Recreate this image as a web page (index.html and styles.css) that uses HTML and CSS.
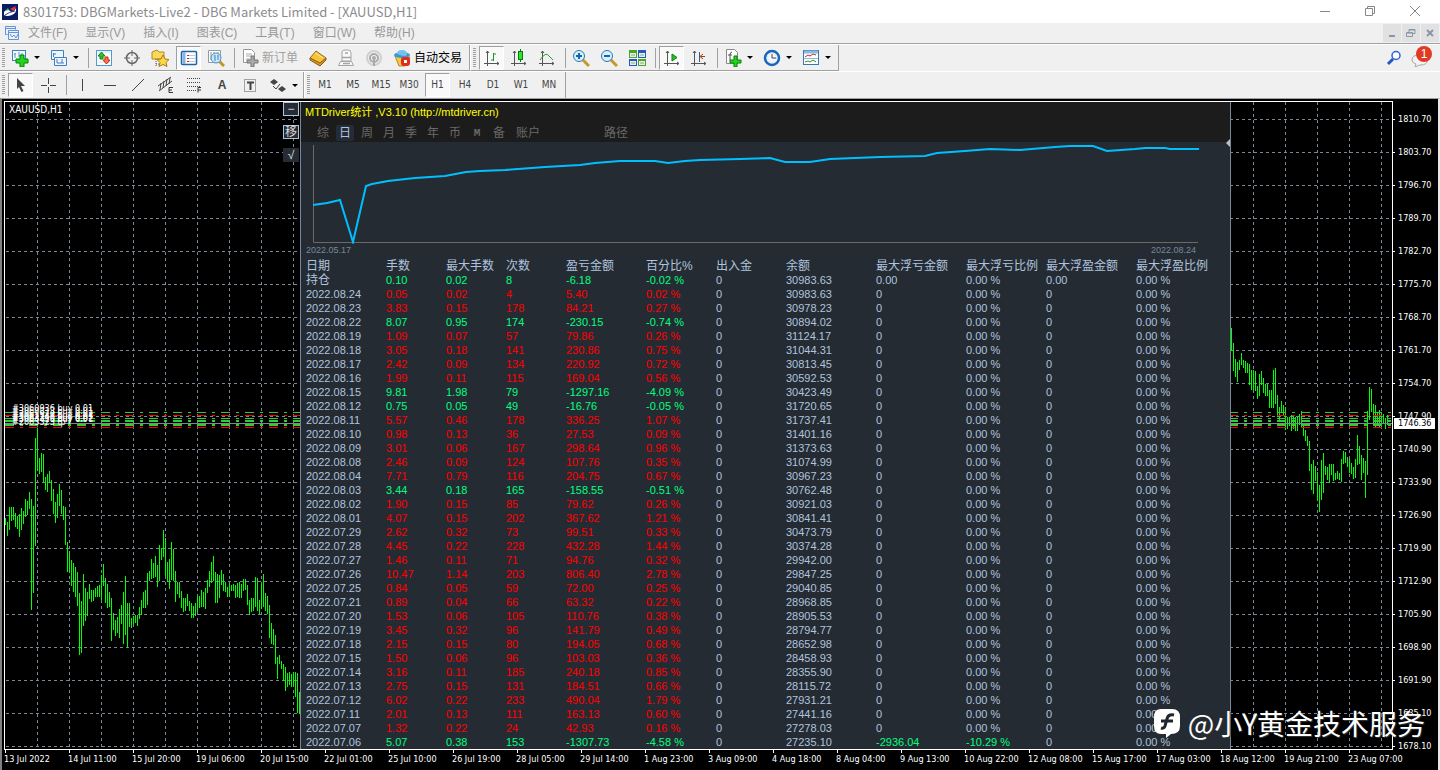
FILE: index.html
```html
<!DOCTYPE html>
<html lang="zh-CN">
<head>
<meta charset="utf-8">
<title>8301753: DBGMarkets-Live2 - DBG Markets Limited - [XAUUSD,H1]</title>
<link rel="stylesheet" href="styles.css">
</head>
<body>
<header class="titlebar">
  <svg class="logo" width="16" height="16" viewBox="0 0 16 16"><rect width="16" height="16" fill="#0b1c63"/><path d="M2 8Q5 4 8 7T14 4Q15 9 10 11T2 11Z" fill="#fff"/><path d="M8 5L14 2L12 7Z" fill="#e33"/><path d="M3 7L6 4L7 6Z" fill="#3ac04e"/><path d="M3 11Q7 8 13 7" stroke="#2b47a8" fill="none"/></svg>
  <h1 class="title">8301753: DBGMarkets-Live2 - DBG Markets Limited - [XAUUSD,H1]</h1>
  <div class="caption-buttons">
    <button aria-label="最小化"><svg width="12" height="12"><path d="M1 6.500h10" stroke="#888"/></svg></button>
    <button aria-label="还原"><svg width="12" height="12" fill="none" stroke="#888"><path d="M1.500 3.500h7v7h-7zM3.500 3.500v-2h7v7h-2"/></svg></button>
    <button aria-label="关闭"><svg width="12" height="12"><path d="M1 1l10 10M11 1L1 11" stroke="#888"/></svg></button>
  </div>
</header>

<nav class="menubar">
  <svg class="menu-icon" width="14" height="14" fill="none" stroke="#5d94e0"><path d="M.5 8.500v-8h10v3M.5 2.500h10M2.500 8.500h-2M3.500 4.500h10v9h-10zM3.500 6.500h10"/><path d="M5 8l2 3 2-2 2 3 2-4"/></svg>
  <button>文件(F)</button><button>显示(V)</button><button>插入(I)</button><button>图表(C)</button><button>工具(T)</button><button>窗口(W)</button><button>帮助(H)</button>
  <div class="mdi-buttons">
    <button aria-label="最小化图表"><svg width="10" height="10"><path d="M2 8h6" stroke="#8797a8" stroke-width="2"/></svg></button>
    <button aria-label="还原图表"><svg width="10" height="10" fill="none" stroke="#8797a8"><path d="M.5 4.500h6v4h-6zM1 5h5M3 4V1.500h6v4H7M3 2h6"/></svg></button>
    <button aria-label="关闭图表"><svg width="10" height="10"><path d="M2 2l6 6M8 2L2 8" stroke="#8797a8" stroke-width="2"/></svg></button>
  </div>
</nav>

<div class="toolbars">
  <div class="toolrow">
    <div class="toolgroup">
      <i class="grip"></i>
      <button class="tool drop" aria-label="新图表"><svg width="18" height="18"><rect x="1.500" y="1.500" width="13" height="10" fill="#eef6ff" stroke="#3d80bd"/><path d="M4 4v5M3 5h2M8 3v5M11 4v4" stroke="#6d94b5"/><path d="M9 6h4v4h4v4h-4v4H9v-4H5v-4h4z" fill="#23d51f" stroke="#078008"/></svg></button>
      <button class="tool drop" aria-label="图表组合"><svg width="18" height="18" fill="#edf5ff" stroke="#3d80bd"><path d="M1.500 1.500h12v9h-12z"/><path d="M3.500 4v4M3 5h3" fill="none"/><path d="M4.500 8.500h12v8h-12z"/><path d="M7 10v4M12 10v4M7 14h7" fill="none"/></svg></button>
      <i class="sep"></i>
      <button class="tool" aria-label="市场报价"><svg width="18" height="18"><rect x="1.500" y="1.500" width="15" height="15" fill="#fff" stroke="#4c9bd6"/><path d="M3 3h12M3 13h12" stroke="#cde"/><path d="M3 7l3.500-4L10 7H8v3H5V7z" fill="#31c12b" stroke="#178217"/><path d="M8 11l3.500 4 3.500-4h-2V8h-3v3z" fill="#f87642" stroke="#c32d12"/></svg></button>
      <button class="tool" aria-label="数据窗口"><svg width="18" height="18" fill="none" stroke="#666"><circle cx="9" cy="9" r="5.500" stroke-width="1.500"/><path d="M9 1v6M9 11v6M1 9h6M11 9h6"/></svg></button>
      <button class="tool" aria-label="收藏夹"><svg width="18" height="18"><path d="M1 3l5-2 2 2h5v7H1z" fill="#f7d95b" stroke="#b58a1c"/><path d="M5 10v7M5 15h3" stroke="#555" stroke-dasharray="1 1"/><path d="M12 6l2 4 4 .5-3 3 1 4-4-2-4 2 1-4-3-3 4-.5z" fill="#ffd743" stroke="#a77a18"/></svg></button>
      <button class="tool pressed" aria-label="导航器"><svg width="18" height="18"><rect x="1.500" y="2.500" width="15" height="13" rx="1" fill="#fff" stroke="#1c63a8" stroke-width="1.500"/><path d="M4 3v12" stroke="#86b2e0" stroke-width="3"/><path d="M7 6.500h2M7 9.500h2M7 12.500h2" stroke="#c22"/><path d="M9 6.500h6M9 9.500h6M9 12.500h6" stroke="#b5cce6"/></svg></button>
      <button class="tool" aria-label="策略测试"><svg width="18" height="18"><path d="M1.500 1.500h12v12h-12z" fill="#fff" stroke="#8b9bab"/><path d="M4 3v8M7 3v6M11 3v5" stroke="#9a8e77"/><circle cx="9" cy="9" r="5" fill="#bfe2fb" fill-opacity=".8" stroke="#4b96cc"/><path d="M8 6v6M11 6v5" stroke="#3b84b8"/><path d="M13 13l4 4" stroke="#c7921f" stroke-width="3"/></svg></button>
      <i class="sep"></i>
      <button class="tool labelled order disabled"><svg width="18" height="18"><path d="M2.500.5h8l3 3v10h-11z" fill="#fff" stroke="#999"/><path d="M5 5h6M5 7h6M5 10h4" stroke="#aaa"/><path d="M10 7h3v4h4v3h-4v4h-3v-4H6v-3h4z" fill="#aaa" stroke="#777"/></svg>新订单</button>
      <button class="tool" aria-label="MetaEditor"><svg width="18" height="18"><path d="M1 9l6-7 10 7-6 7z" fill="#f5c23c" stroke="#9c6710"/><path d="M1 9l10 5 6-5v2l-6 6-10-6z" fill="#d99421" stroke="#8a5d12"/><path d="M6 4l8 5" stroke="#ffeaa0"/></svg></button>
      <button class="tool" aria-label="终端"><svg width="18" height="18" fill="#f8f8f8" stroke="#a5a5a5"><path d="M1.500 16.500l2-4h11l2 4zM5 12V3q0-2 3-2h3q3 0 3 3v8z"/><path d="M5 8.500h9M8 4h3M6 14.500h7" stroke-width="1.500"/></svg></button>
      <button class="tool" aria-label="信号"><svg width="18" height="18" fill="none" stroke="#aaa" stroke-width="2"><circle cx="9" cy="9" r="7" stroke="#d0d0d0"/><circle cx="9" cy="9" r="4"/><circle cx="9" cy="9" r="1"/><path d="M9 10v7"/></svg></button>
      <button class="tool labelled auto"><svg width="18" height="18"><path d="M2 7l4 10h6l5-9z" fill="#f6c944" stroke="#b38822"/><ellipse cx="9" cy="6" rx="8" ry="3" fill="#3b97d2"/><path d="M4 5q0-4 5-4t5 4-10 0z" fill="#75c1ee"/><rect x="8" y="8" width="9" height="9" rx="3" fill="#e02b1d"/><rect x="11" y="11" width="3" height="3" fill="#fff"/></svg>自动交易</button>
    </div>
    <div class="toolgroup">
      <i class="grip"></i>
      <button class="tool pressed" aria-label="柱状图"><svg width="18" height="18" fill="none"><path d="M4.500 2v15M1 14.500h15M3 4l1.500-2L6 4M14 13l2 1.500-2 1.500" stroke="#555"/><path d="M10.500 4v8M10 5h3M8 11h2" stroke="#149a20"/></svg></button>
      <button class="tool" aria-label="蜡烛图"><svg width="18" height="18"><path d="M4.500 2v15M1 14.500h15M3 4l1.500-2L6 4M14 13l2 1.500-2 1.500" stroke="#555" fill="none"/><path d="M10.500 0v13" stroke="#067c0c"/><rect x="8.500" y="2.500" width="4" height="8" fill="#2be72b" stroke="#067c0c"/></svg></button>
      <button class="tool" aria-label="折线图"><svg width="18" height="18" fill="none"><path d="M4.500 2v15M1 14.500h15M3 4l1.500-2L6 4M14 13l2 1.500-2 1.500" stroke="#555"/><path d="M2 11q6-9 9-4l4 4" stroke="#23a12a"/></svg></button>
      <i class="sep"></i>
      <button class="tool" aria-label="放大"><svg width="18" height="18"><path d="M10 10l7 7" stroke="#c79a24" stroke-width="3"/><circle cx="7" cy="7" r="5.500" fill="#d8effd" stroke="#2779b5"/><path d="M4 7h6M7 4v6" stroke="#1767a6" stroke-width="2"/></svg></button>
      <button class="tool" aria-label="缩小"><svg width="18" height="18"><path d="M10 10l7 7" stroke="#c79a24" stroke-width="3"/><circle cx="7" cy="7" r="5.500" fill="#d8effd" stroke="#2779b5"/><path d="M4 7h6" stroke="#1767a6" stroke-width="2"/></svg></button>
      <button class="tool" aria-label="平铺窗口"><svg width="18" height="18"><path d="M1 1h8v8H1zM10 10h8v7h-8z" fill="#4aa52a"/><path d="M10 1h8v8h-8zM1 10h8v7H1z" fill="#2657c4"/><path d="M2 4h6v4H2zM11 4h6v4h-6zM2 12h6v4H2zM11 12h6v4h-6z" fill="#e5f0e5"/><path d="M3 6h4M12 6h4M3 14h4M12 14h4" stroke="#7ab070"/></svg></button>
      <i class="sep"></i>
      <button class="tool pressed" aria-label="自动滚动"><svg width="18" height="18"><path d="M4.500 2v15M1 14.500h15M3 4l1.500-2L6 4M14 13l2 1.500-2 1.500" stroke="#555" fill="none"/><path d="M9 5l5 3.500L9 12z" fill="#27c72b" stroke="#0b7d11"/></svg></button>
      <button class="tool" aria-label="图表平移"><svg width="18" height="18"><path d="M4.500 2v15M1 14.500h15M3 4l1.500-2L6 4M14 13l2 1.500-2 1.500" stroke="#555" fill="none"/><path d="M9.500 3v10" stroke="#26639d"/><path d="M15 7.500h-4M13 5l-3 2.500 3 2.500" stroke="#b1330c" fill="none"/></svg></button>
      <i class="sep"></i>
      <button class="tool drop" aria-label="指标"><svg width="18" height="18"><path d="M2.500.5h8l3 3v11h-11z" fill="#fff" stroke="#888"/><path d="M8 3q-2 0-2 3v5M4 6h4" stroke="#555" fill="none"/><path d="M10 7h3v4h4v3h-4v4h-3v-4H6v-3h4z" fill="#23d51f" stroke="#078008"/></svg></button>
      <button class="tool drop" aria-label="周期"><svg width="18" height="18"><circle cx="9" cy="9" r="7" fill="#f4f8fd" stroke="#1766bd" stroke-width="2.500"/><path d="M9 9V5M9 9h4" stroke="#444"/><circle cx="9" cy="9" r="4.500" fill="none" stroke="#b8c8d8" stroke-dasharray="1 2"/></svg></button>
      <button class="tool drop" aria-label="模板"><svg width="18" height="18"><rect x="1.500" y="1.500" width="15" height="14" fill="#fff" stroke="#3478b5"/><path d="M2 3h14" stroke="#8bb9e6" stroke-width="3"/><path d="M2 9.500h14" stroke="#8bb9e6"/><path d="M3 8l3-2 2 1 3-2 3 1" stroke="#b33420" fill="none"/><path d="M3 13l3-1 2 1 3-2 3 2" stroke="#2a942c" fill="none"/></svg></button>
    </div>
    <div class="notice">
      <button aria-label="搜索"><svg width="16" height="16"><circle cx="10" cy="5.500" r="4" fill="#fff" stroke="#2b62d9" stroke-width="1.500"/><path d="M7 9l-5 5" stroke="#2456c7" stroke-width="3"/></svg></button>
      <button class="chat" aria-label="1 条消息"><svg width="18" height="18"><path d="M1 11q0-5 7-5t8 5-7 5l-5 2 1-3q-4-1-4-4z" fill="#f3f3f6" stroke="#aaa"/></svg><span class="badge">1</span></button>
    </div>
  </div>
  <div class="toolrow">
    <div class="toolgroup">
      <i class="grip"></i>
      <button class="tool pressed" aria-label="光标"><svg width="18" height="18"><path d="M5 2l8 8H9l2.500 5-2 1L7 11l-2 2z" fill="#444"/></svg></button>
      <button class="tool" aria-label="十字线"><svg width="18" height="18"><path d="M9.500 2v6M9.500 11v6M2 9.500h6M11 9.500h6" stroke="#444"/></svg></button>
      <i class="sep"></i>
      <button class="tool" aria-label="垂直线"><svg width="18" height="18"><path d="M9.500 3v12" stroke="#444"/></svg></button>
      <button class="tool" aria-label="水平线"><svg width="18" height="18"><path d="M3 9.500h12" stroke="#444"/></svg></button>
      <button class="tool" aria-label="趋势线"><svg width="18" height="18"><path d="M3 15L15 3" stroke="#444"/></svg></button>
      <button class="tool" aria-label="通道"><svg width="18" height="18"><path d="M1 10L14 1M2 15L15 5M4 7l-1 7M7 5L6 12M10 3L9 10M13 2l-1 6" stroke="#444"/><path d="M16 11.500h-4v5h4M12 14h3" stroke="#333" fill="none"/></svg></button>
      <button class="tool" aria-label="斐波那契"><svg width="18" height="18"><path d="M2 2.500h14M2 6.500h14M2 10.500h14M2 14.500h9" stroke="#444" stroke-dasharray="1 1"/><path d="M16 11.500h-3v5M13 14h3" stroke="#333" fill="none"/></svg></button>
      <button class="tool glyph">A</button>
      <button class="tool" aria-label="文本标签"><svg width="18" height="18"><rect x="3.500" y="3.500" width="11" height="12" fill="none" stroke="#555" stroke-dasharray="1 1"/><path d="M6 6.500h7M9.500 7v7" stroke="#444" stroke-width="2"/></svg></button>
      <button class="tool drop" aria-label="箭头"><svg width="18" height="18" fill="#444"><path d="M5 3l4 3-4 3-4-3zM13 10l4 3-4 3-4-3z"/><path d="M4 10l3 3 4-5" fill="none" stroke="#444"/></svg></button>
    </div>
    <div class="toolgroup">
      <i class="grip"></i>
      <button class="tool period">M1</button><button class="tool period">M5</button><button class="tool period">M15</button><button class="tool period">M30</button><button class="tool period pressed">H1</button><button class="tool period">H4</button><button class="tool period">D1</button><button class="tool period">W1</button><button class="tool period">MN</button>
    </div>
  </div>
</div>

<main class="workspace">
  <section class="plot">
    <svg class="plot-canvas" width="100%" height="100%" shape-rendering="crispEdges">
      <defs>
        <pattern id="vgrid" width="32" height="6" patternUnits="userSpaceOnUse"><rect width="1" height="3" fill="#778899"/></pattern>
        <pattern id="hgrid" y="17" width="6" height="33" patternUnits="userSpaceOnUse"><rect x="1" width="3" height="1" fill="#778899"/></pattern>
      </defs>
      <rect x="1" width="100%" height="100%" fill="url(#vgrid)"/>
      <rect width="100%" height="100%" fill="url(#hgrid)"/>
      <path id="bars" stroke="#00ff00"/>
      <g id="orders" stroke-dasharray="9 6 3 6"></g>
      <line x1="0" x2="100%" y1="321.500" y2="321.500" stroke="#778899"/>
      <g id="order-names" class="order-names"></g>
    </svg>
    <span class="symbol">XAUUSD,H1</span>
    <div class="side-buttons">
      <button class="outlined">−</button><button class="outlined">移</button><button>√</button>
    </div>
    <section class="panel">
      <header class="panel-head">
        <h2>MTDriver统计 ,V3.10 (http://mtdriver.cn)</h2>
        <nav class="tabs"><button>综</button><button class="active">日</button><button>周</button><button>月</button><button>季</button><button>年</button><button>币</button><button class="mono">M</button><button>备</button><button class="wide">账户</button><button class="wide path">路径</button></nav>
      </header>
      <span class="panel-handle"></span>
      <figure class="equity">
        <svg width="100%" height="102" viewBox="301 142 929 102" preserveAspectRatio="none" fill="none">
          <path d="M313.500 145V242.500H1198" stroke="#696969"/>
          <polyline stroke="#00bfff" stroke-width="2" points="313,205 327,203 340,200 353,242 366,186 372,184 388,181 415,178 445,176 466,172 480,171 505,170 545,167 580,165 595,163 620,161 655,161 668,163 685,161 700,160 740,159 770,158 785,162 810,162 830,159 880,157 925,156 937,153 965,151 990,149 1020,150 1055,147 1070,146 1093,146 1107,151 1135,149 1145,148 1165,148 1170,149 1199,149"/>
        </svg>
        <figcaption><span>2022.05.17</span><span>2022.08.24</span></figcaption>
      </figure>
      <table class="stats">
        <colgroup><col class="w80"><col class="w60"><col class="w60"><col class="w60"><col class="w80"><col class="w70"><col class="w70"><col class="w90"><col class="w90"><col class="w80"><col class="w90"><col></colgroup>
        <thead><tr><th>日期</th><th>手数</th><th>最大手数</th><th>次数</th><th>盈亏金额</th><th>百分比%</th><th>出入金</th><th>余额</th><th>最大浮亏金额</th><th>最大浮亏比例</th><th>最大浮盈金额</th><th>最大浮盈比例</th></tr></thead>
        <tbody id="stats-body"></tbody>
      </table>
    </section>
  </section>
  <div class="price-axis" id="prices"></div>
  <div class="time-axis" id="times"></div>
  <div class="watermark">
    <svg width="28" height="30" viewBox="0 0 28 30"><path d="M8 1h11q8 0 8 8v9q0 8-9 8l-5 4v-4H8q-7 0-7-8V9q0-8 7-8z" fill="#fff"/><path d="M21 7q-6-1-7 4l-2 7q-1 3-4 2M8 13h12" fill="none" stroke="#20262c" stroke-width="3"/></svg>
    <span>@小Y黄金技术服务</span>
  </div>
</main>
<script src="app.js"></script>
</body>
</html>
```
FILE: styles.css
```css
* { box-sizing: border-box; }
body {
  margin: 0;
  min-height: 100vh;
  display: flex;
  flex-direction: column;
  background: #f0f0f0;
  font: 12px/16px "Liberation Sans", "Noto Sans CJK SC", sans-serif;
}
button {
  border: 0;
  padding: 0;
  background: none;
  font: inherit;
  color: inherit;
  display: flex;
  align-items: center;
  justify-content: center;
}
h1, h2, figure { margin: 0; font-weight: normal; }
svg { display: block; flex: none; }

.titlebar { display: flex; align-items: center; height: 23px; padding-left: 2px; background: #fff; color: #8c8c8c; }
.title { flex: 1; padding-left: 5px; font: 13px/16px "Noto Sans CJK SC", sans-serif; }
.caption-buttons { display: flex; align-self: stretch; padding-right: 3px; }
.caption-buttons button { width: 45px; padding-bottom: 2px; }

.menubar { display: flex; align-items: center; height: 20px; padding-left: 5px; color: #999; }
.menu-icon { margin-right: 1px; }
.menubar > button { padding: 0 9px; }
.menubar > button:first-of-type { padding-left: 8px; }
.mdi-buttons { display: flex; gap: 1px; margin-left: auto; padding-right: 1px; }
.mdi-buttons button { width: 18px; height: 18px; background: #e1e1e1; }

.toolbars { border-top: 1px solid #a0a0a0; }
.toolrow { display: flex; height: 27px; border-top: 1px solid #fff; }
.toolgroup { display: flex; align-items: center; height: 26px; padding-left: 2px; padding-right: 2px; border-right: 1px solid #a0a0a0; border-bottom: 1px solid #a0a0a0; }
.toolgroup:first-child { padding-right: 0; }
.toolrow:last-child .toolgroup { border-bottom: 0; }
.toolgroup + .toolgroup { padding-left: 2px; border-left: 1px solid #fff; }
.grip { width: 3px; height: 20px; margin-right: 1px; background: repeating-linear-gradient(#a0a0a0 0 1px, #f0f0f0 1px 2px); }
.sep { width: 1px; height: 20px; margin: 0 1px 0 4px; background: #a0a0a0; }
.tool { width: 28px; height: 24px; color: #444; }
.tool.pressed { width: 25px; margin: 0 1px 0 2px; background: #f9f9f9; border: 1px solid; border-color: #a0a0a0 #fff #fff #a0a0a0; }
.tool.drop { width: 39px; gap: 5px; }
.tool.drop::after { content: ""; border: 3px solid transparent; border-top-color: #000; border-bottom: 0; }
.tool.labelled { justify-content: flex-start; padding-left: 5px; gap: 3px; color: #000; white-space: nowrap; }
.tool.order { width: 68px; }
.tool.auto { width: 81px; }
.tool.labelled.disabled { color: #a0a0a0; }
.tool.glyph { font-weight: bold; font-size: 12px; }
.tool.period { font: 10px/14px "DejaVu Sans Condensed", sans-serif; }
.notice { display: flex; align-items: center; gap: 8px; margin-left: auto; padding-right: 10px; }
.chat { position: relative; width: 20px; }
.badge { position: absolute; left: 6px; top: -3px; width: 16px; height: 16px; border-radius: 8px; background: #e03a22; color: #fff; text-align: center; }

.workspace {
  position: relative;
  flex: 1;
  display: grid;
  grid-template-columns: minmax(0, 1fr) 45px;
  grid-template-rows: auto 1fr;
  padding: 2px 0 0 1px;
  border: 1px solid #a0a0a0;
  border-left: 2px solid #808080;
  border-right: 2px solid #e8e8e8;
  border-bottom: 0;
  background: #000;
  color: #fff;
}
.plot { position: relative; border: 1px solid #fff; margin-left: 1px; }
.plot-canvas { position: absolute; inset: 0; }
.symbol { position: absolute; left: 4px; top: 1px; font: 10px/14px "DejaVu Sans Condensed", sans-serif; }
.order-names { font: 9px "DejaVu Sans Condensed", sans-serif; fill: #fff; }
.side-buttons { position: absolute; left: 278px; top: 0; display: grid; gap: 9px; }
.side-buttons button { width: 16px; height: 14px; background: #252c34; color: #ddd; line-height: 12px; }
.side-buttons .outlined { border: 1px solid #b0c4de; }

.panel { position: relative; margin: 0 161px 0 295px; border: solid #778899; border-width: 0 1px; background: #252b33; color: #b0c4de; }
.panel-head { height: 40px; padding-top: 2px; background: #1c1c1c; }
.panel-head h2 { padding-left: 4px; color: #ff0; font-size: 11px; line-height: 16px; }
.tabs { display: flex; gap: 4px; padding: 5px 0 0 13px; color: #696969; }
.tabs button { width: 18px; height: 16px; border-radius: 2px; }
.tabs .active { background: #252c38; color: #b0c4de; }
.tabs .mono { font: bold 11px "Liberation Mono", monospace; }
.tabs .wide { width: 32px; }
.tabs .path { margin-left: 52px; }
.panel-handle { position: absolute; right: 0; top: 37px; border: 4px solid transparent; border-right-color: #c0c0c0; border-left: 0; }
.equity figcaption { display: flex; justify-content: space-between; padding: 0 34px 3px 5px; font-size: 9px; line-height: 12px; color: #778899; }
.stats { width: 100%; table-layout: fixed; border-collapse: collapse; font-size: 11px; line-height: 14px; }
.stats th, .stats td { height: 14px; padding: 0 0 0 5px; text-align: left; font-weight: normal; white-space: nowrap; line-height: 14px; }
.stats th, .stats .open { font-size: 12px; }
.w60 { width: 60px; }
.w70 { width: 70px; }
.w80 { width: 80px; }
.w90 { width: 90px; }
.gain { color: #ff0000; }
.loss { color: #00ff7f; }

.price-axis { position: relative; grid-row: 1 / 3; grid-column: 2; padding-top: 2px; font: 9px/33px "DejaVu Sans Condensed", sans-serif; }
.price { display: flex; align-items: center; gap: 3px; height: 33px; }
.price::before { content: ""; width: 2px; height: 1px; background: #fff; }
.current { position: absolute; left: 1px; right: 3px; top: 317px; padding-left: 4px; background: #fff; color: #000; line-height: 11px; }
.time-axis { display: flex; padding-left: 1px; font: 9px/12px "DejaVu Sans Condensed", sans-serif; white-space: nowrap; }
.time { width: 64px; flex: none; }
.time::before { content: ""; display: block; width: 1px; height: 3px; margin-left: 1px; background: #fff; }
.watermark { position: absolute; right: 13px; bottom: 28px; display: flex; align-items: center; gap: 7px; font: 28px/38px "Noto Sans CJK SC", sans-serif; text-shadow: 1px 1px 1px #333; }
```
FILE: app.js
```js
const SVG = "http://www.w3.org/2000/svg";

// High/low of each hourly bar in thirds of a pixel, below y = 298 of the plot.
const early = "354-375 366-408 321-390 321-363 321-360 339-381 348-387 342-411 324-390 333-372 297-350 303-345 276-327 297-630 318-578 114-438 84-213 174-222 159-216 162-246 231-270 222-276 213-250 240-303 267-342 306-369 282-354 252-318 270-342 318-360 321-435 426-516 453-516 480-558 489-576 501-591 516-618 579-765 603-759 522-678 564-663 576-648 552-597 570-606 570-603 564-591 558-591 555-591 525-600 492-558 534-609 552-624 576-621 594-723 639-690 660-708 651-699 627-714 615-672 576-732 528-705 609-744 609-681 654-684 648-672 645-669 645-678 621-657 600-645 576-624 570-624 519-615 513-543 477-537 489-534 468-531 495-561 435-543 444-480 390-471 414-528 486-546 477-567 426-540 447-543 513-606 546-582 546-594 573-624 594-636 594-633 582-618 603-633 609-654 618-654 609-648 591-636 588-624 570-621 576-621 564-627 540-579 513-561 486-549 468-543 516-609 522-609 525-594 510-555 522-573 546-576 561-591 549-591 555-573 552-573 555-594 549-591 546-594 552-594 537-573 537-570 555-615 600-645 594-636 594-633 531-621 534-633 600-642 552-627 522-621 579-633 588-642 615-714 669-732 687-735 705-792 771-837 765-792 783-807 792-843 801-873 819-861 816-855 822-861 816-858 816-891 819-939 876-942";
// The most recent bars, in pixels of the window.
const recent = "328-351 343-371 359-377 362-382 360-370 353-365 360-368 361-373 363-373 364-385 370-390 370-390 371-391 386-399 374-396 371-385 378-393 384-396 384-396 390-408 390-408 370-408 368-404 395-417 407-420 401-413 405-415 407-430 417-429 417-426 415-431 416-429 417-431 417-431 414-425 411-428 423-436 430-441 436-446 441-471 464-490 460-494 466-481 472-500 485-512 460-500 453-493 466-475 467-480 464-483 464-475 464-481 473-480 471-479 473-480 459-482 451-464 452-463 457-467 459-473 463-474 467-479 459-478 435-465 446-464 455-480 458-473 461-498 411-475 387-420 389-412 404-424 405-427 413-424 410-427 413-426 414-424 418-429 415-425";
let d = "";
early.split(" ").forEach((pair, i) => {
  const [hi, lo] = pair.split("-").map(v => Math.round(v / 3) + 298);
  d += `M${i * 2 + 0.5} ${hi}V${lo}`;
});
recent.split(" ").forEach((pair, i) => {
  const [hi, lo] = pair.split("-").map(v => v - 102);
  d += `M${i * 2 + 1226.5} ${hi}V${lo}`;
});
document.getElementById("bars").setAttribute("d", d);

function add(parent, name, attrs, text) {
  const el = document.createElementNS(SVG, name);
  for (const key in attrs) el.setAttribute(key, attrs[key]);
  if (text) el.textContent = text;
  document.getElementById(parent).append(el);
}
for (const y of [310, 316, 318, 319, 321, 322, 323]) add("orders", "line", { x1: 0, x2: "100%", y1: y + 0.5, y2: y + 0.5, stroke: "#32cd32" });
for (const y of [313, 325]) add("orders", "line", { x1: 0, x2: "100%", y1: y + 0.5, y2: y + 0.5, stroke: "#ff0000" });
[["#3060936 buy 0.01", 309], ["#3060813 buy 0.01", 312], ["#3061970 buy 0.02", 315], ["#3062147 buy 0.03", 317], ["#3063290 buy 0.02", 319], ["#3064418 buy 0.01", 320], ["#2063323 tp", 323]]
  .forEach(([name, y]) => add("order-names", "text", { x: 7, y }, name));

const rows = `持仓 0.10 0.02 8 -6.18 -0.02 30983.63
2022.08.24 0.05 0.02 4 5.40 0.02 30983.63
2022.08.23 3.83 0.15 178 84.21 0.27 30978.23
2022.08.22 8.07 0.95 174 -230.15 -0.74 30894.02
2022.08.19 1.09 0.07 57 79.86 0.26 31124.17
2022.08.18 3.05 0.18 141 230.86 0.75 31044.31
2022.08.17 2.42 0.09 134 220.92 0.72 30813.45
2022.08.16 1.99 0.11 115 169.04 0.56 30592.53
2022.08.15 9.81 1.98 79 -1297.16 -4.09 30423.49
2022.08.12 0.75 0.05 49 -16.76 -0.05 31720.65
2022.08.11 5.57 0.46 178 336.25 1.07 31737.41
2022.08.10 0.98 0.13 36 27.53 0.09 31401.16
2022.08.09 3.01 0.06 167 298.64 0.96 31373.63
2022.08.08 2.46 0.09 124 107.76 0.35 31074.99
2022.08.04 7.71 0.79 116 204.75 0.67 30967.23
2022.08.03 3.44 0.18 165 -158.55 -0.51 30762.48
2022.08.02 1.90 0.15 85 79.62 0.26 30921.03
2022.08.01 4.07 0.15 202 367.62 1.21 30841.41
2022.07.29 2.62 0.32 73 99.51 0.33 30473.79
2022.07.28 4.45 0.22 228 432.28 1.44 30374.28
2022.07.27 1.46 0.11 71 94.76 0.32 29942.00
2022.07.26 10.47 1.14 203 806.40 2.78 29847.25
2022.07.25 0.84 0.05 59 72.00 0.25 29040.85
2022.07.21 0.89 0.04 66 63.32 0.22 28968.85
2022.07.20 1.53 0.06 105 110.76 0.38 28905.53
2022.07.19 3.45 0.32 96 141.79 0.49 28794.77
2022.07.18 2.15 0.15 80 194.05 0.68 28652.98
2022.07.15 1.50 0.06 96 103.03 0.36 28458.93
2022.07.14 3.16 0.11 185 240.18 0.85 28355.90
2022.07.13 2.75 0.15 131 184.51 0.66 28115.72
2022.07.12 6.02 0.22 233 490.04 1.79 27931.21
2022.07.11 2.01 0.13 111 163.13 0.60 27441.16
2022.07.07 1.32 0.22 24 42.93 0.16 27278.03
2022.07.06 5.07 0.38 153 -1307.73 -4.58 27235.10`.split("\n");
document.getElementById("stats-body").innerHTML = rows.map((line, i) => {
  const [date, lots, max, count, profit, pct, balance] = line.split(" ");
  const tone = profit[0] === "-" ? "loss" : "gain";
  const last = i === rows.length - 1;
  const flat = i === 0 ? "0.00" : "0";
  const cell = (text, cls = "") => `<td${cls && ` class="${cls}"`}>${text}</td>`;
  return "<tr>" + cell(date, i === 0 ? "open" : "") +
    [lots, max, count, profit, pct + " %"].map(v => cell(v, tone)).join("") +
    cell("0") + cell(balance) +
    (last ? cell("-2936.04", "loss") + cell("-10.29 %", "loss") : cell(flat) + cell("0.00 %")) +
    cell(flat) + cell("0.00 %") + "</tr>";
}).join("");

document.getElementById("prices").innerHTML =
  "1810.70 1803.70 1796.70 1789.70 1782.70 1775.70 1768.70 1761.70 1754.70 1747.90 1740.90 1733.90 1726.90 1719.90 1712.90 1705.90 1698.90 1691.90 1685.10 1678.10"
    .split(" ").map(p => `<div class="price">${p}</div>`).join("") + '<div class="current">1746.36</div>';
document.getElementById("times").innerHTML =
  "13 Jul 2022,14 Jul 11:00,15 Jul 20:00,19 Jul 06:00,20 Jul 15:00,22 Jul 01:00,25 Jul 10:00,26 Jul 19:00,28 Jul 05:00,29 Jul 14:00,1 Aug 23:00,3 Aug 09:00,4 Aug 18:00,8 Aug 04:00,9 Aug 13:00,10 Aug 22:00,12 Aug 08:00,15 Aug 17:00,17 Aug 03:00,18 Aug 12:00,19 Aug 21:00,23 Aug 07:00"
    .split(",").map(t => `<div class="time">${t}</div>`).join("");
```
